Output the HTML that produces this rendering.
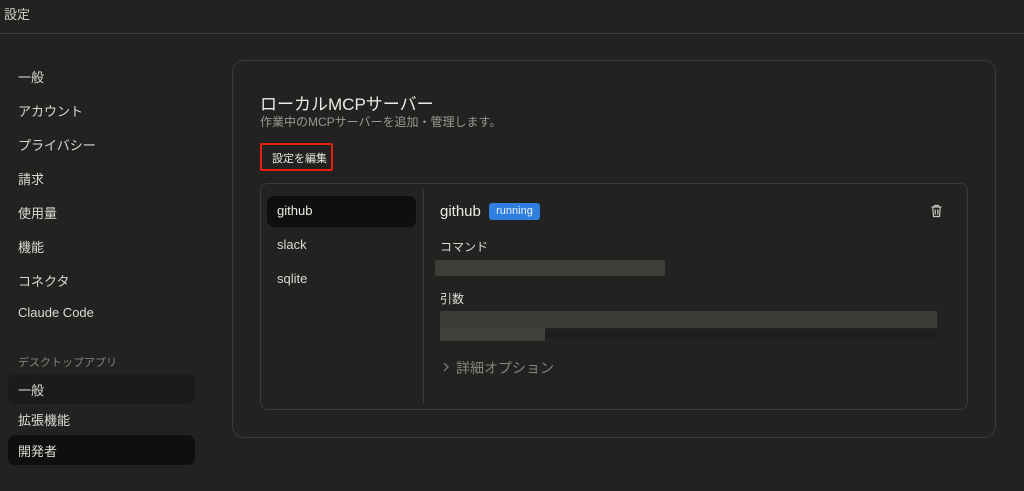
<!DOCTYPE html>
<html><head><meta charset="utf-8"><style>
*{margin:0;padding:0;box-sizing:border-box}
body{width:1024px;height:491px;background:#222220;color:#e8e6e1;font-family:"Liberation Sans","Noto Sans CJK JP",sans-serif;position:relative;overflow:hidden}
.a{position:absolute;white-space:nowrap}
.nav{left:18px;font-size:13px;color:#dcdad5}
.hl{position:absolute;left:8px;width:187px;height:30px;border-radius:7px}
</style></head><body>
<div class="a" style="left:4px;top:4px;font-size:13px;color:#cfcdc8">設定</div>
<div class="a" style="left:0;top:33px;width:1024px;height:1px;background:#3a3a37"></div>

<div class="a nav" style="top:67px">一般</div>
<div class="a nav" style="top:101px">アカウント</div>
<div class="a nav" style="top:135px">プライバシー</div>
<div class="a nav" style="top:169px">請求</div>
<div class="a nav" style="top:203px">使用量</div>
<div class="a nav" style="top:237px">機能</div>
<div class="a nav" style="top:271px">コネクタ</div>
<div class="a nav" style="top:305px">Claude Code</div>
<div class="a" style="left:18px;top:354px;font-size:11px;color:#85837e">デスクトップアプリ</div>
<div class="hl" style="top:374px;background:#1b1b1a"></div>
<div class="a nav" style="top:380px">一般</div>
<div class="a nav" style="top:410px">拡張機能</div>
<div class="hl" style="top:435px;background:#0f0f0e"></div>
<div class="a nav" style="top:441px">開発者</div>

<div class="a" style="left:232px;top:60px;width:764px;height:378px;border:1px solid #3a3a37;border-radius:12px"></div>
<div class="a" style="left:260px;top:90px;font-size:17px;font-weight:normal;color:#ecebe7">ローカルMCPサーバー</div>
<div class="a" style="left:260px;top:113px;font-size:12px;color:#9a9893">作業中のMCPサーバーを追加・管理します。</div>
<div class="a" style="left:260px;top:143px;width:73px;height:28px;border:2px solid #e8200f;border-radius:2px;font-size:11px;color:#e8e6e1;padding:5px 0 0 10px">設定を編集</div>

<div class="a" style="left:260px;top:183px;width:708px;height:227px;border:1px solid #3a3a37;border-radius:8px"></div>
<div class="a" style="left:267px;top:196px;width:149px;height:31px;background:#0f0f0e;border-radius:7px"></div>
<div class="a" style="left:277px;top:203px;font-size:13px;font-weight:500;color:#ecebe7">github</div>
<div class="a" style="left:277px;top:237px;font-size:13px;color:#dcdad5">slack</div>
<div class="a" style="left:277px;top:271px;font-size:13px;color:#dcdad5">sqlite</div>
<div class="a" style="left:423px;top:190px;width:1px;height:213px;background:#3a3a37"></div>

<div class="a" style="left:440px;top:203px;font-size:15px;font-weight:500;color:#ecebe7">github</div>
<div class="a" style="left:489px;top:203px;width:51px;height:17px;background:#2f7fe0;border-radius:3px;font-size:11px;color:#e8f0ff;text-align:center;line-height:17px">running</div>
<svg class="a" style="left:930px;top:204px" width="13" height="14" viewBox="0 0 13 14" fill="none" stroke="#c8c6c1" stroke-width="1.2"><path d="M1.5 3h10M4.5 3V1.5h4V3M2.8 3l.7 9.5h6l.7-9.5M5.2 5.5v5M7.8 5.5v5"/></svg>

<div class="a" style="left:440px;top:238px;font-size:12px;color:#dcdad5">コマンド</div>
<div class="a" style="left:435px;top:260px;width:230px;height:16px;background:#3e3d3a"></div>
<div class="a" style="left:440px;top:290px;font-size:12px;color:#dcdad5">引数</div>
<div class="a" style="left:440px;top:311px;width:497px;height:17px;background:#3d3c39"></div>
<div class="a" style="left:440px;top:328px;width:105px;height:13px;background:#41403c"></div>
<div class="a" style="left:545px;top:330px;width:392px;height:9px;background:#1e1e1c"></div>
<svg class="a" style="left:442px;top:361px" width="8" height="12" viewBox="0 0 8 12" fill="none" stroke="#85837e" stroke-width="1.2"><path d="M2 2l4 4-4 4"/></svg>
<div class="a" style="left:456px;top:358px;font-size:14px;color:#85837e">詳細オプション</div>
</body></html>
